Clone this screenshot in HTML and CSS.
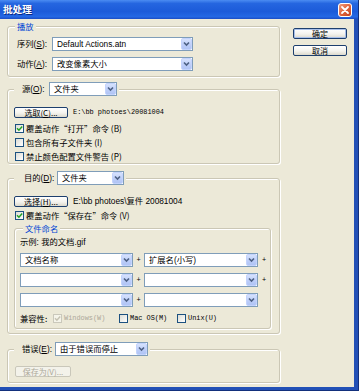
FILE: index.html
```html
<!DOCTYPE html>
<html lang="zh-CN">
<head>
<meta charset="utf-8">
<title>批处理</title>
<link rel="stylesheet" href="styles.css">
</head>
<body>
<div class="window">
  <div class="titlebar">
    <span class="title">批处理</span>
    <span class="close">
      <svg width="14" height="14" viewBox="0 0 14 14">
        <defs>
          <linearGradient id="cg" x1="0" y1="0" x2="1" y2="1">
            <stop offset="0" stop-color="#f0a184"/>
            <stop offset="0.5" stop-color="#e0643c"/>
            <stop offset="1" stop-color="#c2401c"/>
          </linearGradient>
        </defs>
        <rect x="0.5" y="0.5" width="13" height="13" rx="2.5" fill="url(#cg)" stroke="#fff"/>
        <path d="M4 4 L10 10 M10 4 L4 10" stroke="#fff" stroke-width="1.8" stroke-linecap="round"/>
      </svg>
    </span>
  </div>
  <div class="frame">
    <div class="main">
      <div class="group g-play">
        <div class="legend legend-text">播放</div>
        <div class="row first-row">
          <span class="lbl w-play">序列(<u>S</u>):</span>
          <div class="combo w141"><span class="val">Default Actions.atn</span><span class="drop"><svg width="9" height="10" viewBox="0 0 9 10"><path d="M2 3.5 L4.5 6 L7 3.5" stroke="#4d6185" stroke-width="1.6" fill="none"/></svg></span></div>
        </div>
        <div class="row next-row">
          <span class="lbl w-play">动作(<u>A</u>):</span>
          <div class="combo w141"><span class="val">改变像素大小</span><span class="drop"><svg width="9" height="10" viewBox="0 0 9 10"><path d="M2 3.5 L4.5 6 L7 3.5" stroke="#4d6185" stroke-width="1.6" fill="none"/></svg></span></div>
        </div>
      </div>

      <div class="group g-src">
        <div class="legend legend-combo">
          <span class="lbl w-src">源(<u>O</u>):</span>
          <div class="combo w68"><span class="val">文件夹</span><span class="drop"><svg width="9" height="10" viewBox="0 0 9 10"><path d="M2 3.5 L4.5 6 L7 3.5" stroke="#4d6185" stroke-width="1.6" fill="none"/></svg></span></div>
        </div>
        <div class="row btn-row">
          <span class="btn w54">选取(<u>C</u>)...</span>
          <span class="path mono">E:\bb photoes\20081004</span>
        </div>
        <div class="checks">
          <label class="check"><span class="box on"><svg width="7" height="7" viewBox="0 0 7 7"><path d="M1 3.3 L2.9 5.2 L6.2 1.6" stroke="#21a121" stroke-width="1.5" fill="none"/></svg></span>覆盖动作“打开”命令 (B)</label>
          <label class="check"><span class="box"></span>包含所有子文件夹 (I)</label>
          <label class="check"><span class="box"></span>禁止颜色配置文件警告 (P)</label>
        </div>
      </div>

      <div class="group g-dst">
        <div class="legend legend-combo">
          <span class="lbl w-dst">目的(<u>D</u>):</span>
          <div class="combo w67"><span class="val">文件夹</span><span class="drop"><svg width="9" height="10" viewBox="0 0 9 10"><path d="M2 3.5 L4.5 6 L7 3.5" stroke="#4d6185" stroke-width="1.6" fill="none"/></svg></span></div>
        </div>
        <div class="row btn-row">
          <span class="btn w54">选择(<u>H</u>)...</span>
          <span class="path">E:\bb photoes\复件 20081004</span>
        </div>
        <label class="check dst-check"><span class="box on"><svg width="7" height="7" viewBox="0 0 7 7"><path d="M1 3.3 L2.9 5.2 L6.2 1.6" stroke="#21a121" stroke-width="1.5" fill="none"/></svg></span>覆盖动作“保存在”命令 (V)</label>

        <div class="group g-name">
          <div class="legend legend-text">文件命名</div>
          <div class="sample">示例: 我的文档.gif</div>
          <div class="name-rows">
            <div class="name-row">
              <div class="combo w113"><span class="val">文档名称</span><span class="drop"><svg width="9" height="10" viewBox="0 0 9 10"><path d="M2 3.5 L4.5 6 L7 3.5" stroke="#4d6185" stroke-width="1.6" fill="none"/></svg></span></div>
              <span class="plus">+</span>
              <div class="combo w114"><span class="val">扩展名(小写)</span><span class="drop"><svg width="9" height="10" viewBox="0 0 9 10"><path d="M2 3.5 L4.5 6 L7 3.5" stroke="#4d6185" stroke-width="1.6" fill="none"/></svg></span></div>
              <span class="plus">+</span>
            </div>
            <div class="name-row">
              <div class="combo w113"><span class="val"></span><span class="drop"><svg width="9" height="10" viewBox="0 0 9 10"><path d="M2 3.5 L4.5 6 L7 3.5" stroke="#4d6185" stroke-width="1.6" fill="none"/></svg></span></div>
              <span class="plus">+</span>
              <div class="combo w114"><span class="val"></span><span class="drop"><svg width="9" height="10" viewBox="0 0 9 10"><path d="M2 3.5 L4.5 6 L7 3.5" stroke="#4d6185" stroke-width="1.6" fill="none"/></svg></span></div>
              <span class="plus">+</span>
            </div>
            <div class="name-row">
              <div class="combo w113"><span class="val"></span><span class="drop"><svg width="9" height="10" viewBox="0 0 9 10"><path d="M2 3.5 L4.5 6 L7 3.5" stroke="#4d6185" stroke-width="1.6" fill="none"/></svg></span></div>
              <span class="plus">+</span>
              <div class="combo w114"><span class="val"></span><span class="drop"><svg width="9" height="10" viewBox="0 0 9 10"><path d="M2 3.5 L4.5 6 L7 3.5" stroke="#4d6185" stroke-width="1.6" fill="none"/></svg></span></div>
            </div>
          </div>
          <div class="compat">
            <span class="compat-lbl">兼容性:</span>
            <label class="check c-win disabled"><span class="box on"><svg width="7" height="7" viewBox="0 0 7 7"><path d="M1 3.3 L2.9 5.2 L6.2 1.6" stroke="#c5c2b2" stroke-width="1.5" fill="none"/></svg></span><span class="mono">Windows(W)</span></label>
            <label class="check c-mac"><span class="box"></span><span class="mono">Mac OS(M)</span></label>
            <label class="check c-unix"><span class="box"></span><span class="mono">Unix(U)</span></label>
          </div>
        </div>
      </div>

      <div class="group g-err">
        <div class="legend legend-combo">
          <span class="lbl w-err">错误(<u>E</u>):</span>
          <div class="combo w93"><span class="val">由于错误而停止</span><span class="drop"><svg width="9" height="10" viewBox="0 0 9 10"><path d="M2 3.5 L4.5 6 L7 3.5" stroke="#4d6185" stroke-width="1.6" fill="none"/></svg></span></div>
        </div>
        <div class="row save-row">
          <span class="btn w56 off">保存为(V)...</span>
        </div>
      </div>
    </div>

    <div class="side">
      <span class="btn w54 default">确定</span>
      <span class="btn w54">取消</span>
    </div>
  </div>
</div>
</body>
</html>
```

FILE: styles.css
```css
* {
  box-sizing: border-box;
  margin: 0;
  padding: 0;
}

body {
  margin: 0;
  background: #ffffff;
  font-family: "Liberation Sans", "Noto Sans CJK SC", sans-serif;
  font-size: 8.3px;
  line-height: 1;
  color: #000;
}

u {
  text-decoration: underline;
  text-underline-offset: 1px;
}

.window {
  width: 359px;
  height: 391px;
  display: flex;
  flex-direction: column;
  background: #2250b6;
  border-right: 1px solid #13307c;
  border-bottom: 1px solid #13307c;
}

.titlebar {
  height: 19px;
  flex: none;
  display: flex;
  align-items: center;
  justify-content: space-between;
  padding: 0 6px 0 3px;
  background: linear-gradient(#4b8cf2 0%, #2566e0 18%, #1c5bd9 60%, #2468e4 88%, #1a4cc4 100%);
}

.title {
  color: #fff;
  font-family: "Noto Sans CJK SC", sans-serif;
  font-weight: bold;
  font-size: 9.6px;
  text-shadow: 1px 1px 0 #0c2a86;
}

.close {
  width: 14px;
  height: 14px;
  display: flex;
}

.frame {
  flex: 1;
  display: flex;
  align-items: flex-start;
  margin: 0 4px 3px 0;
  padding: 7px 0 0 7px;
  background: #ece9d8;
}

.main {
  width: 273px;
  display: flex;
  flex-direction: column;
}

.side {
  margin-left: 13px;
  padding-top: 2px;
  display: flex;
  flex-direction: column;
  gap: 6px;
}

/* group boxes */
.group {
  display: flex;
  flex-direction: column;
  align-items: flex-start;
  border: 1px solid #cbc7b5;
  border-radius: 3px;
  box-shadow: inset 1px 1px 0 #fff, 1px 1px 0 #fff;
}

.legend {
  display: flex;
  align-items: center;
  background: #ece9d8;
}

.legend-text {
  height: 10px;
  margin-top: -6px;
  padding: 0 2px;
  color: #0046d5;
  font-family: "Noto Sans CJK SC", sans-serif;
}

.legend-combo {
  height: 14px;
  margin: -8px 0 0 6px;
  padding-right: 2px;
}

.g-play {
  padding-bottom: 5px;
}
.g-play .legend {
  margin-left: 7px;
}

.g-src {
  margin-top: 12px;
}

.g-dst {
  margin-top: 14px;
  padding-bottom: 4px;
}

.g-err {
  margin-top: 15px;
  padding-bottom: 5px;
}

.row {
  display: flex;
  align-items: center;
  height: 14px;
}

.first-row {
  margin-top: 6px;
  padding-left: 9px;
}
.next-row {
  margin-top: 6px;
  padding-left: 9px;
}

.lbl {
  flex: none;
}
.w-play { width: 35px; }
.w-src { width: 35px; padding-left: 8px; }
.w-dst { width: 43px; padding-left: 10px; }
.w-err { width: 41px; padding-left: 8px; }

/* combo boxes */
.combo {
  height: 14px;
  display: flex;
  align-items: stretch;
  border: 1px solid #7f9db9;
  background: #fff;
  flex: none;
}
.combo .val {
  flex: 1;
  display: flex;
  align-items: center;
  padding-left: 4px;
  white-space: nowrap;
  overflow: hidden;
}
.drop {
  width: 11px;
  display: flex;
  align-items: center;
  justify-content: center;
  border: 1px solid #c3d3fd;
  border-radius: 2px;
  background: linear-gradient(#d6e2fd, #bccdf8 60%, #b0c4f5);
}
.w141 { width: 141px; }
.w68 { width: 68px; }
.w67 { width: 67px; }
.w93 { width: 93px; }
.w113 { width: 113px; }
.w114 { width: 114px; }

/* buttons */
.btn {
  height: 11px;
  display: flex;
  align-items: center;
  justify-content: center;
  border: 1px solid #1d3f6e;
  border-radius: 2px;
  background: linear-gradient(#ffffff, #f4f3ee 55%, #dcd9cc);
  font-family: "Noto Sans CJK SC", sans-serif;
  font-size: 8px;
  white-space: nowrap;
}
.btn.default {
  box-shadow: inset 0 0 0 1px #a9c0ea;
}
.btn.off {
  border-color: #c9c7ba;
  background: #f3f2ea;
  color: #aca899;
}
.w54 { width: 54px; }
.w56 { width: 56px; }

.btn-row {
  margin-top: 11px;
  padding-left: 6px;
  height: 11px;
}

.path {
  margin-left: 5px;
  white-space: nowrap;
}
.mono {
  font-family: "Liberation Mono", "Noto Sans CJK SC", monospace;
  font-size: 6.9px;
}

/* checkboxes */
.checks {
  margin-top: 4px;
  display: flex;
  flex-direction: column;
  gap: 1px;
}
.check {
  height: 13px;
  display: flex;
  align-items: center;
  padding-left: 7px;
  font-family: "Noto Sans CJK SC", sans-serif;
  white-space: nowrap;
}
.box {
  width: 9px;
  height: 9px;
  flex: none;
  margin-right: 2px;
  display: flex;
  align-items: center;
  justify-content: center;
  border: 1px solid #1c5180;
  background: linear-gradient(135deg, #dcdcd5, #ffffff);
}
.dst-check {
  margin-top: 2px;
}

/* file naming */
.g-name {
  margin: 6px 0 0 6px;
  width: 257px;
  padding-bottom: 4px;
}
.g-name .legend {
  margin-left: 8px;
}
.sample {
  margin-top: 4px;
  height: 10px;
  padding-left: 5px;
  display: flex;
  align-items: center;
}
.name-rows {
  margin-top: 6px;
  padding-left: 5px;
  display: flex;
  flex-direction: column;
  gap: 6px;
}
.name-row {
  display: flex;
  align-items: center;
}
.plus {
  width: 11px;
  text-align: center;
  font-family: "Liberation Mono", monospace;
  font-size: 7px;
}
.name-row .w114 + .plus {
  width: 12px;
}

.compat {
  margin-top: 5px;
  height: 12px;
  padding-left: 5px;
  display: flex;
  align-items: center;
}
.compat-lbl {
  width: 33px;
  font-family: "Noto Sans CJK SC", sans-serif;
}
.compat .check {
  padding-left: 0;
  height: 12px;
}
.c-win { width: 66px; }
.c-mac { width: 58px; }
.check.disabled {
  color: #aca899;
}
.check.disabled .box {
  border-color: #cac8bb;
  background: #f5f4ea;
}

.save-row {
  margin-top: 10px;
  padding-left: 7px;
  height: 11px;
}
```
